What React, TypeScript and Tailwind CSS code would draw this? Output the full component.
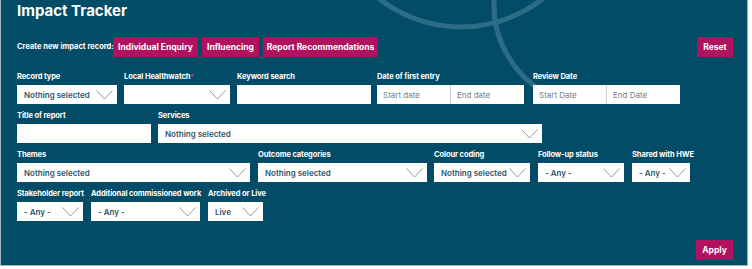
import React from "react";

const Chevron = () => (
  <svg width="17" height="10" viewBox="0 0 17 10" className="shrink-0">
    <path d="M0.5 0.5 L8.5 9 L16.5 0.5" fill="none" stroke="#8d9ba3" strokeWidth="1" />
  </svg>
);

const Label = ({ children }: { children: React.ReactNode }) => (
  <div className="h-[14px] text-[7.5px] font-bold leading-[14px] tracking-[-0.1px] text-white whitespace-nowrap">{children}</div>
);

const Select = ({ w, value }: { w: string; value?: string }) => (
  <div className={`${w} h-[19px] bg-white flex items-center justify-between pl-[7px] pr-[4px]`}>
    <span className="text-[8px] font-semibold text-[#2d5668] whitespace-nowrap">{value ?? ""}</span>
    <Chevron />
  </div>
);

const Field = ({ label, w, value, req }: { label: string; w: string; value?: string; req?: boolean }) => (
  <div className={`${w} flex flex-col shrink-0`}>
    <Label>
      {label}
      {req && <span className="text-[#e0487f] align-top text-[6px]">*</span>}
    </Label>
    <div className="mt-[1px]">
      <Select w={w} value={value} />
    </div>
  </div>
);

const Btn = ({ children, w }: { children: React.ReactNode; w: string }) => (
  <div className={`${w} h-[20px] bg-[#b0125f] text-white text-[8.5px] font-bold flex items-center justify-center whitespace-nowrap`}>
    {children}
  </div>
);

const DateRange = ({ a, b }: { a: string; b: string }) => (
  <div className="w-[147px] h-[19px] bg-white flex">
    <div className="w-[74px] h-full border-r border-[#c9d2d7] flex items-center pl-[6px] text-[8px] text-[#72828b]">{a}</div>
    <div className="flex-1 h-full flex items-center pl-[6px] text-[8px] text-[#72828b]">{b}</div>
  </div>
);

export default function App() {
  return (
    <div className="w-[752px] h-[269px] bg-white" style={{ fontFamily: "Inter, 'Noto Sans', sans-serif" }}>
      <div className="relative w-[748px] h-[266px] bg-[#034c67] border-l border-r border-b border-[#9fb6c2] overflow-hidden pl-[16px] pr-[14px]">
        <svg className="absolute inset-0 pointer-events-none" width="748" height="266">
          <circle cx="460" cy="-105" r="132" fill="none" stroke="#2c6c87" strokeWidth="5" />
          <path d="M493.5 -5 A101 101 0 0 0 560 100" fill="none" stroke="#2c6c87" strokeWidth="5" />
        </svg>
        <div className="relative">
          <div className="h-[22px] text-[15px] font-bold leading-[21px] text-white">Impact Tracker</div>
          <div className="mt-[15px] flex items-center">
            <div className="text-[7.5px] font-bold text-white w-[96px] whitespace-nowrap">Create new impact record:</div>
            <div className="flex gap-[4px]">
              <Btn w="w-[85px]">Individual Enquiry</Btn>
              <Btn w="w-[57px]">Influencing</Btn>
              <Btn w="w-[115px]">Report Recommendations</Btn>
            </div>
            <div className="ml-auto">
              <Btn w="w-[36px]">Reset</Btn>
            </div>
          </div>

          <div className="mt-[13px] flex">
            <Field label="Record type" w="w-[100px]" value="Nothing selected" />
            <div className="ml-[7px]"><Field label="Local Healthwatch" req w="w-[106px]" /></div>
            <div className="ml-[7px] w-[134px] flex flex-col">
              <Label>Keyword search</Label>
              <div className="mt-[1px] w-[134px] h-[19px] bg-white" />
            </div>
            <div className="ml-[6px] flex flex-col">
              <Label>Date of first entry</Label>
              <div className="mt-[1px]"><DateRange a="Start date" b="End date" /></div>
            </div>
            <div className="ml-[9px] flex flex-col">
              <Label>Review Date</Label>
              <div className="mt-[1px]"><DateRange a="Start Date" b="End Date" /></div>
            </div>
          </div>

          <div className="mt-[5px] flex">
            <div className="w-[134px] flex flex-col">
              <Label>Title of report</Label>
              <div className="mt-[1px] w-[134px] h-[19px] bg-white" />
            </div>
            <div className="ml-[7px]"><Field label="Services" w="w-[384px]" value="Nothing selected" /></div>
          </div>

          <div className="mt-[5px] flex">
            <Field label="Themes" w="w-[233px]" value="Nothing selected" />
            <div className="ml-[8px]"><Field label="Outcome categories" w="w-[169px]" value="Nothing selected" /></div>
            <div className="ml-[7px]"><Field label="Colour coding" w="w-[96px]" value="Nothing selected" /></div>
            <div className="ml-[8px]"><Field label="Follow-up status" w="w-[86px]" value="- Any -" /></div>
            <div className="ml-[8px]"><Field label="Shared with HWE" w="w-[58px]" value="- Any -" /></div>
          </div>

          <div className="mt-[5px] flex">
            <Field label="Stakeholder report" w="w-[66px]" value="- Any -" />
            <div className="ml-[8px]"><Field label="Additional commissioned work" w="w-[109px]" value="- Any -" /></div>
            <div className="ml-[8px]"><Field label="Archived or Live" w="w-[55px]" value="Live" /></div>
          </div>

          <div className="mt-[19px] flex justify-end">
            <Btn w="w-[37px]">Apply</Btn>
          </div>
        </div>
      </div>
    </div>
  );
}
